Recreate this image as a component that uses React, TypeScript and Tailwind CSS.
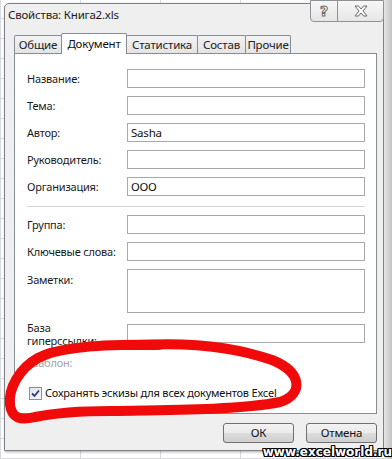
import React from "react";

const font = "font-['Noto_Sans',sans-serif] tracking-[-0.2px]";

function Field({ label, value = "", tall = false }: { label: string; value?: string; tall?: boolean }) {
  return (
    <div className={`flex ${tall ? "items-start" : "items-center"}`}>
      <div className={`w-[100px] text-[11px] leading-[14px] text-[#1a1a1a] ${tall ? "pt-[4px]" : ""}`}>{label}</div>
      <div
        className={`w-[238px] ${tall ? "h-[44px]" : "h-[19px]"} border border-[#a7a9ae] bg-white pl-[3px] text-[11.5px] leading-[17px] text-[#111]`}
      >
        {value}
      </div>
    </div>
  );
}

export default function App() {
  const tabs = [
    { t: "Общие", w: "w-[48px]" },
    { t: "Документ", w: "w-[66px]", active: true },
    { t: "Статистика", w: "w-[72px]" },
    { t: "Состав", w: "w-[49px]" },
    { t: "Прочие", w: "w-[46px]" },
  ];
  return (
    <div className={`relative w-[392px] h-[459px] overflow-hidden flex bg-white ${font}`}>
      <div className="flex-1 h-full pl-[4px] pt-[3px] bg-[linear-gradient(#d9dbde_1px,transparent_1px),linear-gradient(90deg,#d9dbde_1px,transparent_1px)] bg-[size:80px_20px] bg-[position:0_-2px]">
        <div className="w-[380px] h-[448px] border border-[#7f8389] rounded-t-[5px] bg-[#efefef] shadow-[1px_1px_3px_rgba(0,0,0,0.35)]">
          {/* title bar */}
          <div className="h-[29px] flex justify-between items-start">
            <div className="pl-[3px] mt-[3px] text-[11.5px] leading-[16px] text-[#1a1a1a]">Свойства: Книга2.xls</div>
            <div className="flex -mt-[4px] mr-[-1px]">
              <div className="w-[28px] h-[22px] border border-[#8e9296] rounded-bl-[4px] bg-[linear-gradient(#f7f7f7,#e6e6e6)] flex items-center justify-center">
                <span className="text-[14px] font-bold leading-none text-white [-webkit-text-stroke:1px_#6b6b6b] font-['DejaVu_Sans',sans-serif]">?</span>
              </div>
              <div className="w-[47px] h-[22px] -ml-px border border-[#8e9296] rounded-br-[4px] bg-[linear-gradient(#f7f7f7,#e6e6e6)] flex items-center justify-center">
                <svg width="14" height="12" viewBox="0 0 14 12">
                  <path
                    d="M1 1 H4.5 L7 4 L9.5 1 H13 L9 6 L13 11 H9.5 L7 8 L4.5 11 H1 L5 6 Z"
                    fill="#fff"
                    stroke="#6b6b6b"
                    strokeWidth="1"
                    strokeLinejoin="round"
                  />
                </svg>
              </div>
            </div>
          </div>

          {/* tabs */}
          <div className="ml-[9px] w-[363px]">
            <div className="relative z-10 flex items-end h-[21px] -mb-px">
              {tabs.map((tab, i) =>
                tab.active ? (
                  <div
                    key={tab.t}
                    className={`${tab.w} ${i > 0 ? "-ml-px" : ""} relative z-10 h-[21px] border border-b-0 border-[#898c95] bg-white flex justify-center pt-[2px] text-[11.5px] leading-[16px] text-[#111] rounded-t-[2px]`}
                  >
                    {tab.t}
                  </div>
                ) : (
                  <div
                    key={tab.t}
                    className={`${tab.w} ${i > 0 ? "-ml-px" : ""} mb-px h-[18px] border border-b-0 border-[#898c95] bg-[linear-gradient(#f3f3f3,#e4e4e4)] flex justify-center pt-[1px] text-[11.5px] leading-[16px] text-[#222] rounded-t-[2px]`}
                  >
                    {tab.t}
                  </div>
                )
              )}
            </div>

            {/* panel */}
            <div className="h-[361px] border border-[#898c95] bg-white pl-[12px] pt-[15px] flex flex-col gap-[8px]">
              <Field label="Название:" />
              <Field label="Тема:" />
              <Field label="Автор:" value="Sasha" />
              <Field label="Руководитель:" />
              <Field label="Организация:" value="ООО" />
              <div className="mt-[2px] w-[338px] h-px bg-[#d5d5d5]" />
              <Field label="Группа:" />
              <Field label="Ключевые слова:" />
              <Field label="Заметки:" tall />
              <div className="mt-[3px] flex items-start">
                <div className="w-[100px] -mt-[3px] text-[11px] leading-[13px] text-[#1a1a1a]">
                  База
                  <br />
                  гиперссылки:
                </div>
                <div className="w-[238px] h-[19px] border border-[#a7a9ae] bg-white" />
              </div>
              <div className="mt-[1px] h-[14px] text-[11px] leading-[14px] text-[#a3a3a3]">Шаблон:</div>
              <div className="mt-[8px] pl-[2px] flex items-center h-[14px]">
                <div className="w-[13px] h-[13px] border border-[#8f8f8f] bg-[linear-gradient(135deg,#dfe4ee,#f6f7fa)] flex items-center justify-center">
                  <svg width="9" height="9" viewBox="0 0 9 9">
                    <path d="M1 4.5 L3.5 7 L8 1.5" fill="none" stroke="#2c3e74" strokeWidth="1.8" />
                  </svg>
                </div>
                <span className="ml-[3px] text-[11px] leading-[14px] text-[#111]">Сохранять эскизы для всех документов Excel</span>
              </div>
            </div>

            {/* buttons */}
            <div className="mt-[9px] flex justify-end gap-[12px]">
              <div className="w-[71px] h-[20px] rounded-[3px] border border-[#707070] bg-[linear-gradient(#f2f2f2_0%,#ebebeb_50%,#dddddd_51%,#cfcfcf_100%)] flex items-center justify-center text-[11.5px] text-[#111]">
                ОК
              </div>
              <div className="w-[71px] h-[20px] rounded-[3px] border border-[#707070] bg-[linear-gradient(#f2f2f2_0%,#ebebeb_50%,#dddddd_51%,#cfcfcf_100%)] flex items-center justify-center text-[11.5px] text-[#111]">
                Отмена
              </div>
            </div>
          </div>
        </div>
      </div>
      <div className="w-[8px] h-full bg-[linear-gradient(90deg,#e4e4e4,#c4c4c4)]" />

      {/* red hand-drawn loop */}
      <svg className="absolute inset-0 pointer-events-none" width="392" height="459" viewBox="0 0 392 459">
        <path
          d="M160 345 C110 344 60 346 38 358 C20 368 8 388 10 405 C12 418 20 421 35 417 C60 412 80 411 110 411 C170 410 240 410 280 402 C304 394 302 372 272 360 C235 347 190 342 140 345"
          fill="none"
          stroke="#f00a0a"
          strokeWidth="10"
          strokeLinecap="round"
          strokeLinejoin="round"
        />
      </svg>

      {/* watermark */}
      <div className="absolute right-[0px] bottom-[-1px] text-[12px] leading-[16px] font-bold tracking-[0px] text-white font-['DejaVu_Sans',sans-serif] [text-shadow:1px_1px_0_#000,-1px_-1px_0_#000,1px_-1px_0_#000,-1px_1px_0_#000,0_1px_0_#000,0_-1px_0_#000,1px_0_0_#000,-1px_0_0_#000]">
        www.excelworld.ru
      </div>
    </div>
  );
}
